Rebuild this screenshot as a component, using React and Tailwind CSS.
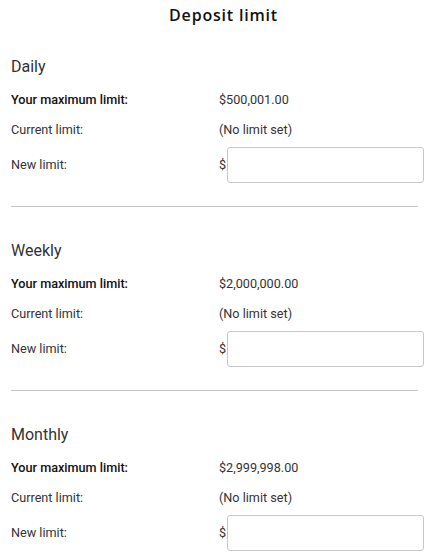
import React from 'react';

const sections = [
  { title: 'Daily', max: '$500,001.00', current: '(No limit set)' },
  { title: 'Weekly', max: '$2,000,000.00', current: '(No limit set)' },
  { title: 'Monthly', max: '$2,999,998.00', current: '(No limit set)' },
];

const LimitSection = ({ title, max, current, last }) => (
  <div>
    <div className="h-[24px] flex items-center text-[16px] text-[#333]">{title}</div>
    <div className="mt-[6px] h-[30px] flex items-center text-[12.65px]">
      <div className="w-[208px] font-medium text-[#111]">Your maximum limit:</div>
      <div className="text-[#333]">{max}</div>
    </div>
    <div className="h-[30px] flex items-center text-[12.65px]">
      <div className="w-[208px] text-[#333]">Current limit:</div>
      <div className="text-[#333]">{current}</div>
    </div>
    <div className="mt-[2px] h-[36px] flex items-center text-[12.65px]">
      <div className="w-[208px] text-[#333]">New limit:</div>
      <div className="flex items-center flex-1">
        <span className="w-[8px] text-[#333]">$</span>
        <input
          type="text"
          className="h-[36px] flex-1 border border-[#c8c8c8] rounded-[3px] outline-none px-2 text-[12px]"
        />
      </div>
    </div>
    {!last && <div className="mt-[23px] mb-[32px] mr-[6px] border-t border-[#c4c4c4]" />}
  </div>
);

export default function App() {
  return (
    <div className="w-[431px] h-[560px] bg-white overflow-hidden pl-[11px] pr-[7px]" style={{ fontFamily: 'Roboto, "Liberation Sans", sans-serif' }}>
      <div className="h-[30px] pl-[12px] flex items-center justify-center text-[16px] font-semibold tracking-[0.8px] text-[#111]" style={{ fontFamily: '"Open Sans", "Noto Sans", sans-serif' }}>
        Deposit limit
      </div>
      <div className="mt-[25px]">
        {sections.map((s, i) => (
          <LimitSection key={s.title} {...s} last={i === sections.length - 1} />
        ))}
      </div>
    </div>
  );
}
